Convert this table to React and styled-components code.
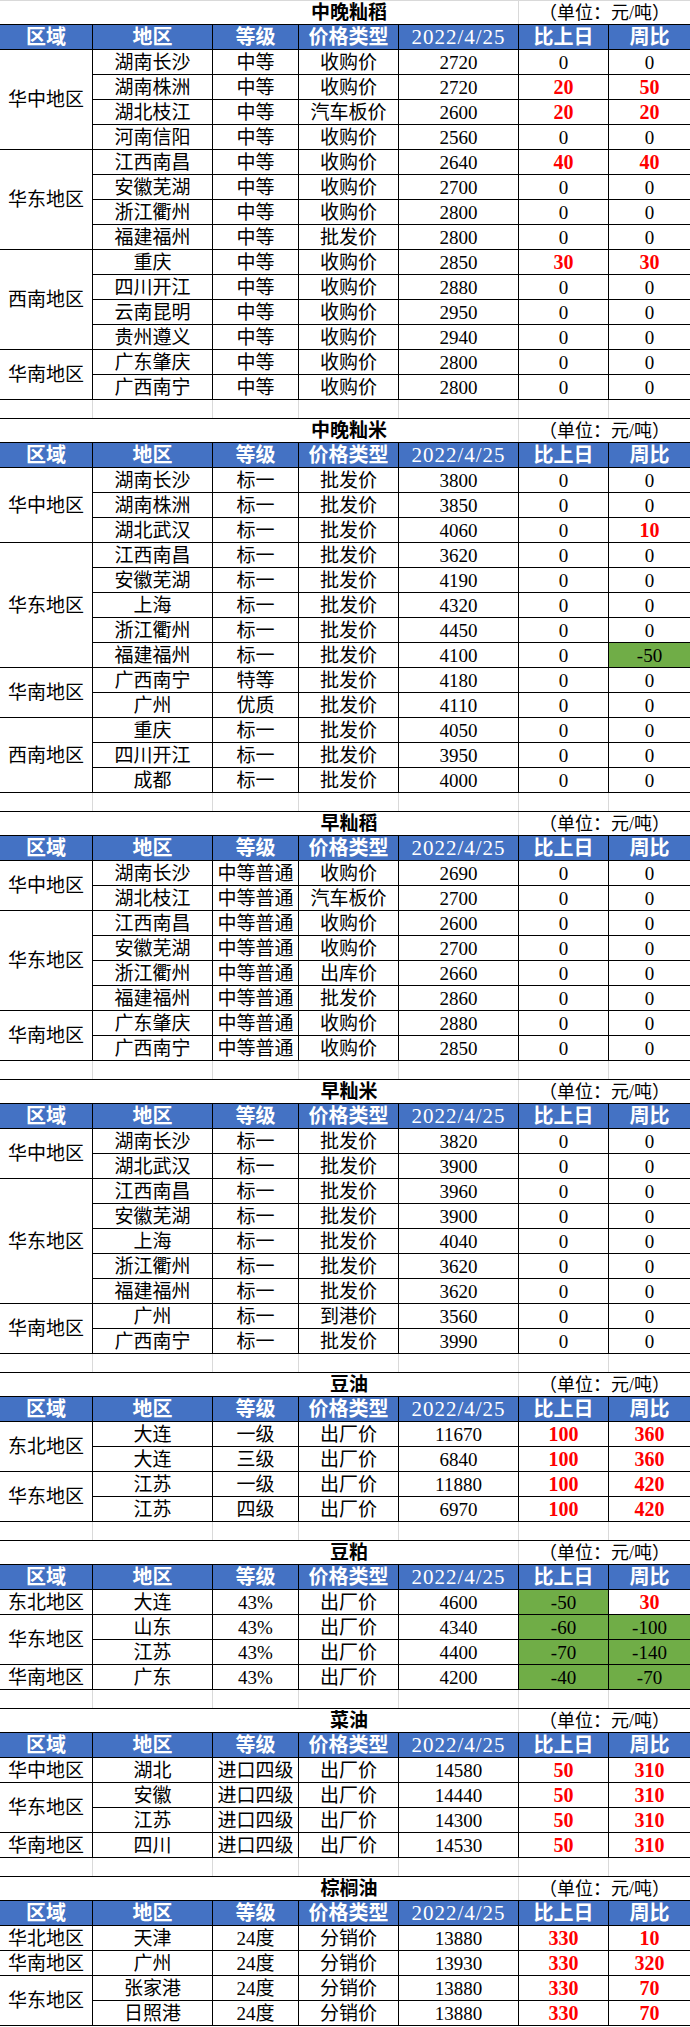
import React from 'react';
import styled, { createGlobalStyle, css } from 'styled-components';

const GlobalStyle = createGlobalStyle`
  html, body { margin: 0; padding: 0; background: #fff; }
  body {
    font-family: "Liberation Serif", "Noto Sans CJK SC", serif;
    color: #000;
  }
`;

const COLS = '93px 120px 86px 100px 120px 90px 81px';
const GRID_LINE = '#d9d9d9';
const HEAD_BG = '#4472C4';
const RED = '#FF0000';
const GREEN = '#70AD47';

const Page = styled.div`
  width: 690px;
  display: flex;
  flex-direction: column;
`;

const Section = styled.section`
  display: flex;
  flex-direction: column;
`;

const TitleRow = styled.div`
  display: grid;
  grid-template-columns: ${COLS};
  grid-template-rows: 23px;
  border-top: 1px solid ${(p) => (p.$first ? GRID_LINE : '#000')};
  border-bottom: 1px solid #000;
`;

const TitleText = styled.div`
  grid-column: 4;
  display: flex;
  align-items: center;
  justify-content: center;
  white-space: nowrap;
  font-size: 19px;
  font-weight: 700;
  line-height: 1;
`;

const UnitText = styled.div`
  grid-column: 6 / span 2;
  display: flex;
  align-items: center;
  justify-content: center;
  white-space: nowrap;
  font-size: 18px;
  line-height: 1;
  border-left: 1px solid ${GRID_LINE};
  margin-left: -1px;
`;

const Table = styled.div`
  display: grid;
  grid-template-columns: ${COLS};
  grid-auto-rows: 25px;
`;

const cellBase = css`
  box-sizing: border-box;
  display: flex;
  align-items: center;
  justify-content: center;
  white-space: nowrap;
  line-height: 1;
  border-bottom: 1px solid #000;
  border-right: ${(p) => (p.$last ? 'none' : '1px solid #000')};
`;

const HeadCell = styled.div`
  ${cellBase};
  background: ${HEAD_BG};
  color: #fff;
  font-weight: ${(p) => (p.$date ? 400 : 700)};
  font-size: ${(p) => (p.$date ? '21px' : '20px')};
  letter-spacing: ${(p) => (p.$date ? '1px' : '0')};
`;

const RegionCell = styled.div`
  ${cellBase};
  grid-column: 1;
  grid-row: span ${(p) => p.$span};
  font-size: 19px;
`;

const Cell = styled.div`
  ${cellBase};
  font-size: 19px;
  ${(p) =>
    p.$tone === 'up' &&
    css`
      color: ${RED};
      font-weight: 700;
      font-size: 20px;
    `}
  ${(p) =>
    p.$tone === 'down' &&
    css`
      background: ${GREEN};
    `}
`;

const Spacer = styled.div`
  display: grid;
  grid-template-columns: ${COLS};
  grid-template-rows: 18px;
`;

const SpacerCell = styled.div`
  box-sizing: border-box;
  border-right: ${(p) => (p.$last ? 'none' : `1px solid ${GRID_LINE}`)};
`;

const HEADERS = ['区域', '地区', '等级', '价格类型', '2022/4/25', '比上日', '周比'];

const sections = [
  {
    title: '中晚籼稻',
    groups: [
      ['华中地区', [
        ['湖南长沙', '中等', '收购价', 2720, 0, 0],
        ['湖南株洲', '中等', '收购价', 2720, 20, 50],
        ['湖北枝江', '中等', '汽车板价', 2600, 20, 20],
        ['河南信阳', '中等', '收购价', 2560, 0, 0],
      ]],
      ['华东地区', [
        ['江西南昌', '中等', '收购价', 2640, 40, 40],
        ['安徽芜湖', '中等', '收购价', 2700, 0, 0],
        ['浙江衢州', '中等', '收购价', 2800, 0, 0],
        ['福建福州', '中等', '批发价', 2800, 0, 0],
      ]],
      ['西南地区', [
        ['重庆', '中等', '收购价', 2850, 30, 30],
        ['四川开江', '中等', '收购价', 2880, 0, 0],
        ['云南昆明', '中等', '收购价', 2950, 0, 0],
        ['贵州遵义', '中等', '收购价', 2940, 0, 0],
      ]],
      ['华南地区', [
        ['广东肇庆', '中等', '收购价', 2800, 0, 0],
        ['广西南宁', '中等', '收购价', 2800, 0, 0],
      ]],
    ],
  },
  {
    title: '中晚籼米',
    groups: [
      ['华中地区', [
        ['湖南长沙', '标一', '批发价', 3800, 0, 0],
        ['湖南株洲', '标一', '批发价', 3850, 0, 0],
        ['湖北武汉', '标一', '批发价', 4060, 0, 10],
      ]],
      ['华东地区', [
        ['江西南昌', '标一', '批发价', 3620, 0, 0],
        ['安徽芜湖', '标一', '批发价', 4190, 0, 0],
        ['上海', '标一', '批发价', 4320, 0, 0],
        ['浙江衢州', '标一', '批发价', 4450, 0, 0],
        ['福建福州', '标一', '批发价', 4100, 0, -50],
      ]],
      ['华南地区', [
        ['广西南宁', '特等', '批发价', 4180, 0, 0],
        ['广州', '优质', '批发价', 4110, 0, 0],
      ]],
      ['西南地区', [
        ['重庆', '标一', '批发价', 4050, 0, 0],
        ['四川开江', '标一', '批发价', 3950, 0, 0],
        ['成都', '标一', '批发价', 4000, 0, 0],
      ]],
    ],
  },
  {
    title: '早籼稻',
    groups: [
      ['华中地区', [
        ['湖南长沙', '中等普通', '收购价', 2690, 0, 0],
        ['湖北枝江', '中等普通', '汽车板价', 2700, 0, 0],
      ]],
      ['华东地区', [
        ['江西南昌', '中等普通', '收购价', 2600, 0, 0],
        ['安徽芜湖', '中等普通', '收购价', 2700, 0, 0],
        ['浙江衢州', '中等普通', '出库价', 2660, 0, 0],
        ['福建福州', '中等普通', '批发价', 2860, 0, 0],
      ]],
      ['华南地区', [
        ['广东肇庆', '中等普通', '收购价', 2880, 0, 0],
        ['广西南宁', '中等普通', '收购价', 2850, 0, 0],
      ]],
    ],
  },
  {
    title: '早籼米',
    groups: [
      ['华中地区', [
        ['湖南长沙', '标一', '批发价', 3820, 0, 0],
        ['湖北武汉', '标一', '批发价', 3900, 0, 0],
      ]],
      ['华东地区', [
        ['江西南昌', '标一', '批发价', 3960, 0, 0],
        ['安徽芜湖', '标一', '批发价', 3900, 0, 0],
        ['上海', '标一', '批发价', 4040, 0, 0],
        ['浙江衢州', '标一', '批发价', 3620, 0, 0],
        ['福建福州', '标一', '批发价', 3620, 0, 0],
      ]],
      ['华南地区', [
        ['广州', '标一', '到港价', 3560, 0, 0],
        ['广西南宁', '标一', '批发价', 3990, 0, 0],
      ]],
    ],
  },
  {
    title: '豆油',
    groups: [
      ['东北地区', [
        ['大连', '一级', '出厂价', 11670, 100, 360],
        ['大连', '三级', '出厂价', 6840, 100, 360],
      ]],
      ['华东地区', [
        ['江苏', '一级', '出厂价', 11880, 100, 420],
        ['江苏', '四级', '出厂价', 6970, 100, 420],
      ]],
    ],
  },
  {
    title: '豆粕',
    groups: [
      ['东北地区', [['大连', '43%', '出厂价', 4600, -50, 30]]],
      ['华东地区', [
        ['山东', '43%', '出厂价', 4340, -60, -100],
        ['江苏', '43%', '出厂价', 4400, -70, -140],
      ]],
      ['华南地区', [['广东', '43%', '出厂价', 4200, -40, -70]]],
    ],
  },
  {
    title: '菜油',
    groups: [
      ['华中地区', [['湖北', '进口四级', '出厂价', 14580, 50, 310]]],
      ['华东地区', [
        ['安徽', '进口四级', '出厂价', 14440, 50, 310],
        ['江苏', '进口四级', '出厂价', 14300, 50, 310],
      ]],
      ['华南地区', [['四川', '进口四级', '出厂价', 14530, 50, 310]]],
    ],
  },
  {
    title: '棕榈油',
    groups: [
      ['华北地区', [['天津', '24度', '分销价', 13880, 330, 10]]],
      ['华南地区', [['广州', '24度', '分销价', 13930, 330, 320]]],
      ['华东地区', [
        ['张家港', '24度', '分销价', 13880, 330, 70],
        ['日照港', '24度', '分销价', 13880, 330, 70],
      ]],
    ],
  },
];

const toneOf = (v) => (v > 0 ? 'up' : v < 0 ? 'down' : undefined);

function PriceSection({ data, first, last }) {
  return (
    <Section>
      <TitleRow $first={first}>
        <TitleText>{data.title}</TitleText>
        <UnitText>（单位：元/吨）</UnitText>
      </TitleRow>
      <Table>
        {HEADERS.map((h, i) => (
          <HeadCell key={h} $date={i === 4} $last={i === HEADERS.length - 1}>
            {h}
          </HeadCell>
        ))}
        {data.groups.map(([region, rows], gi) => (
          <React.Fragment key={gi}>
            <RegionCell $span={rows.length}>{region}</RegionCell>
            {rows.map((r, ri) => (
              <React.Fragment key={ri}>
                <Cell>{r[0]}</Cell>
                <Cell>{r[1]}</Cell>
                <Cell>{r[2]}</Cell>
                <Cell>{r[3]}</Cell>
                <Cell $tone={toneOf(r[4])}>{r[4]}</Cell>
                <Cell $tone={toneOf(r[5])} $last>
                  {r[5]}
                </Cell>
              </React.Fragment>
            ))}
          </React.Fragment>
        ))}
      </Table>
      {!last && (
        <Spacer>
          {HEADERS.map((h, i) => (
            <SpacerCell key={h} $last={i === HEADERS.length - 1} />
          ))}
        </Spacer>
      )}
    </Section>
  );
}

export default function App() {
  return (
    <>
      <GlobalStyle />
      <Page>
        {sections.map((s, i) => (
          <PriceSection
            key={s.title}
            data={s}
            first={i === 0}
            last={i === sections.length - 1}
          />
        ))}
      </Page>
    </>
  );
}
